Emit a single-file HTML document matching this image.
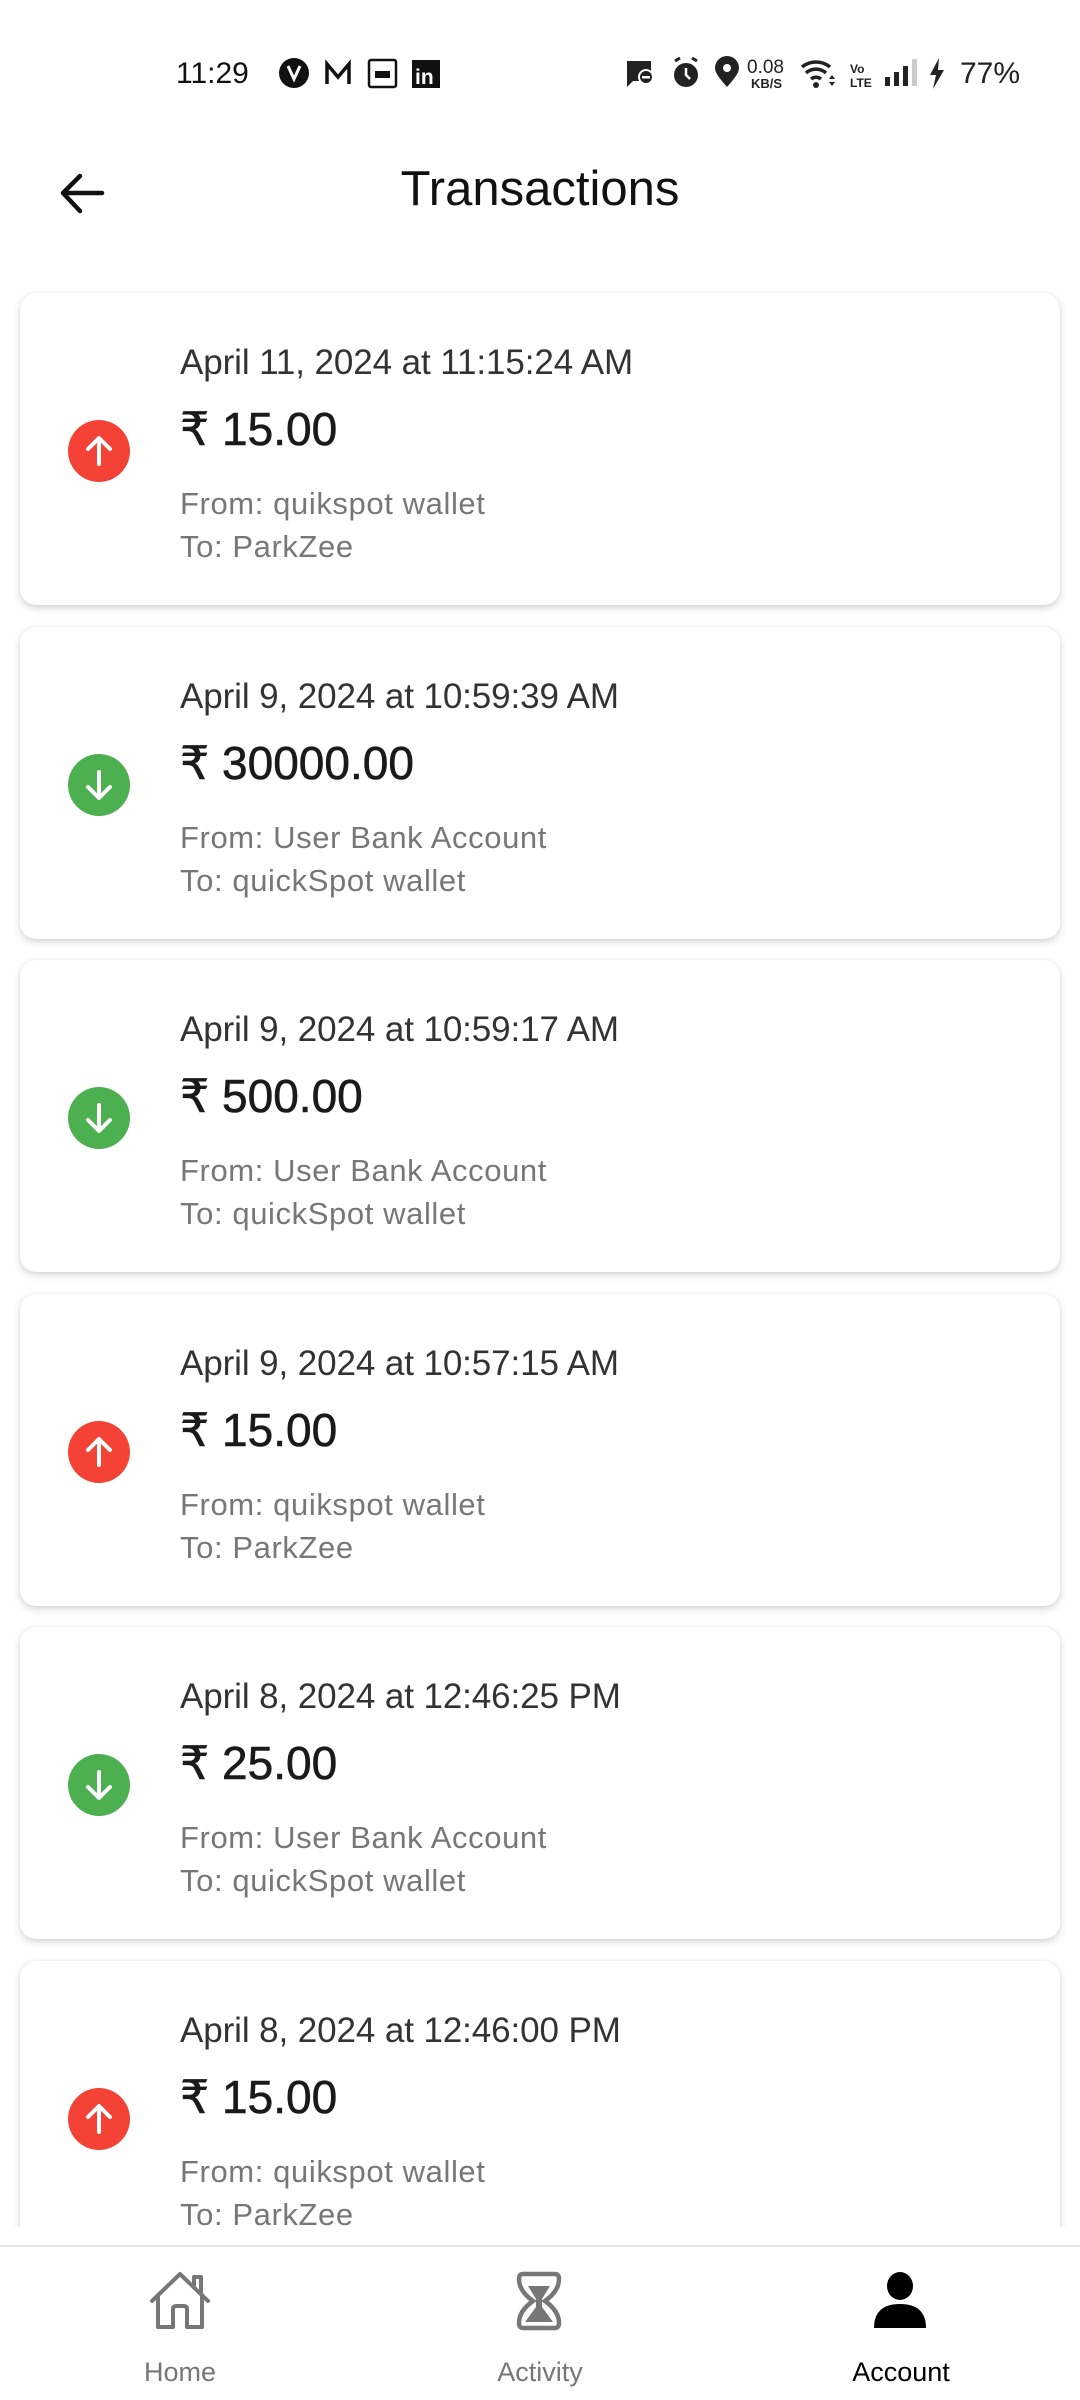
<!DOCTYPE html>
<html><head><meta charset="utf-8"><style>
*{margin:0;padding:0;box-sizing:border-box}
body{width:1080px;height:2400px;background:#fff;position:relative;overflow:hidden;font-family:"Liberation Sans",sans-serif}
.abs{position:absolute}
.t{position:absolute;line-height:1;white-space:nowrap}
.card{position:absolute;left:20px;width:1040px;height:312px;background:#fff;border-radius:16px;box-shadow:0 3px 8px rgba(0,0,0,0.16),0 0 3px rgba(0,0,0,0.06)}
.ic{position:absolute;left:48px;top:127px;width:62px;height:62px;border-radius:50%}
.up{background:#f44336}.dn{background:#4caf50}
.ic svg{position:absolute;left:0;top:0}
.date{left:160px;top:52px;font-size:35px;color:#333;letter-spacing:-0.1px}
.amt{left:160px;top:113px;font-size:46px;color:#1a1a1a;-webkit-text-stroke:0.6px #1a1a1a}
.fr{left:160px;top:195px;font-size:31px;color:#777;letter-spacing:0.6px}
.to{left:160px;top:238px;font-size:31px;color:#777;letter-spacing:0.6px}
.nav{position:absolute;left:0;top:2245px;width:1080px;height:155px;background:#fff;border-top:2px solid #e6e6e6}
.lbl{position:absolute;top:112px;font-size:27px;color:#777;transform:translateX(-50%)}
</style></head><body>
<!-- status bar -->
<div class="t" style="left:176px;top:59px;font-size:30px;color:#111">11:29</div>
<svg class="abs" style="left:278px;top:57px" width="165" height="32" viewBox="0 0 165 32">
<circle cx="16" cy="16" r="15" fill="#111"/><path d="M10 9 L16 22 L22 9" stroke="#fff" stroke-width="3" fill="none"/>
<path d="M49 27 V7 L60 20 L71 7 V27" stroke="#111" stroke-width="3.5" fill="none"/>
<rect x="91" y="3" width="27" height="27" rx="2" fill="none" stroke="#111" stroke-width="2.5"/><rect x="97" y="14" width="15" height="7" fill="#111"/>
<rect x="134" y="3" width="28" height="28" fill="#111"/><text x="137" y="27" font-family="Liberation Sans" font-weight="bold" font-size="21" fill="#fff">in</text>
</svg>
<svg class="abs" style="left:625px;top:55px" width="330" height="36" viewBox="0 0 330 36">
<path d="M2 6 H26 V26 H8 L2 32 Z" fill="#222"/><circle cx="21" cy="22" r="7" fill="#222" stroke="#fff" stroke-width="2"/><rect x="17" y="21" width="8" height="2.5" fill="#fff"/>
<circle cx="61" cy="20" r="12" fill="#222"/><path d="M50 6 L55 3 M72 6 L67 3" stroke="#222" stroke-width="3"/><path d="M61 13 V20 L65 24" stroke="#fff" stroke-width="2.5" fill="none"/>
<path d="M102 32 C95 24 90 18 90 13 A12 12 0 0 1 114 13 C114 18 109 24 102 32Z" fill="#222"/><circle cx="102" cy="13" r="4" fill="#fff"/>
<text x="122" y="18" font-family="Liberation Sans" font-size="19" fill="#222">0.08</text><text x="126" y="33" font-family="Liberation Sans" font-size="13" font-weight="bold" fill="#222">KB/S</text>
<path d="M177 12 A22 22 0 0 1 205 12 M181 18 A15 15 0 0 1 201 18 M186 24 A8 8 0 0 1 196 24" stroke="#222" stroke-width="3.5" fill="none"/><circle cx="191" cy="30" r="3" fill="#222"/><path d="M204 24 L207 20 L210 24Z M204 27 L207 31 L210 27Z" fill="#222"/>
<text x="225" y="18" font-family="Liberation Sans" font-size="12" font-weight="bold" fill="#222">Vo</text><text x="225" y="32" font-family="Liberation Sans" font-size="12" font-weight="bold" fill="#222">LTE</text>
<rect x="260" y="22" width="5" height="9" fill="#222"/><rect x="269" y="17" width="5" height="14" fill="#222"/><rect x="278" y="11" width="5" height="20" fill="#222"/><rect x="287" y="4" width="5" height="27" fill="#ccc"/>
<path d="M314 3 L305 20 H311 L308 34 L319 15 H313 Z" fill="#222"/>
</svg>
<div class="t" style="left:960px;top:59px;font-size:30px;color:#222">77%</div>

<!-- header -->
<svg class="abs" style="left:58px;top:172px" width="50" height="44" viewBox="0 0 50 44">
<path d="M44 21 H6 M22 4 L5 21 L22 39" stroke="#111" stroke-width="4.5" fill="none" stroke-linecap="round" stroke-linejoin="round"/>
</svg>
<div class="t" style="left:0;width:1080px;text-align:center;top:165px;font-size:49px;color:#111">Transactions</div>

<!-- cards -->
<div class="abs" style="left:0;top:0;width:1080px;height:2227px;overflow:hidden">
<div class="card" style="top:293px"><div class="ic up"><svg width="62" height="62"><path d="M31 44 V19 M20 29 L31 18 L42 29" stroke="#fff" stroke-width="4" fill="none" stroke-linecap="round" stroke-linejoin="round"/></svg></div>
<div class="t date">April 11, 2024 at 11:15:24 AM</div><div class="t amt">₹ 15.00</div><div class="t fr">From: quikspot wallet</div><div class="t to">To: ParkZee</div></div>

<div class="card" style="top:627px"><div class="ic dn"><svg width="62" height="62"><path d="M31 18 V43 M20 33 L31 44 L42 33" stroke="#fff" stroke-width="4" fill="none" stroke-linecap="round" stroke-linejoin="round"/></svg></div>
<div class="t date">April 9, 2024 at 10:59:39 AM</div><div class="t amt">₹ 30000.00</div><div class="t fr">From: User Bank Account</div><div class="t to">To: quickSpot wallet</div></div>

<div class="card" style="top:960px"><div class="ic dn"><svg width="62" height="62"><path d="M31 18 V43 M20 33 L31 44 L42 33" stroke="#fff" stroke-width="4" fill="none" stroke-linecap="round" stroke-linejoin="round"/></svg></div>
<div class="t date">April 9, 2024 at 10:59:17 AM</div><div class="t amt">₹ 500.00</div><div class="t fr">From: User Bank Account</div><div class="t to">To: quickSpot wallet</div></div>

<div class="card" style="top:1294px"><div class="ic up"><svg width="62" height="62"><path d="M31 44 V19 M20 29 L31 18 L42 29" stroke="#fff" stroke-width="4" fill="none" stroke-linecap="round" stroke-linejoin="round"/></svg></div>
<div class="t date">April 9, 2024 at 10:57:15 AM</div><div class="t amt">₹ 15.00</div><div class="t fr">From: quikspot wallet</div><div class="t to">To: ParkZee</div></div>

<div class="card" style="top:1627px"><div class="ic dn"><svg width="62" height="62"><path d="M31 18 V43 M20 33 L31 44 L42 33" stroke="#fff" stroke-width="4" fill="none" stroke-linecap="round" stroke-linejoin="round"/></svg></div>
<div class="t date">April 8, 2024 at 12:46:25 PM</div><div class="t amt">₹ 25.00</div><div class="t fr">From: User Bank Account</div><div class="t to">To: quickSpot wallet</div></div>

<div class="card" style="top:1961px"><div class="ic up"><svg width="62" height="62"><path d="M31 44 V19 M20 29 L31 18 L42 29" stroke="#fff" stroke-width="4" fill="none" stroke-linecap="round" stroke-linejoin="round"/></svg></div>
<div class="t date">April 8, 2024 at 12:46:00 PM</div><div class="t amt">₹ 15.00</div><div class="t fr">From: quikspot wallet</div><div class="t to">To: ParkZee</div></div>
</div>

<!-- bottom nav -->
<div class="nav">
<svg class="abs" style="left:148px;top:24px" width="64" height="60" viewBox="0 0 64 60">
<path d="M4 30 L32 3 L60 30 M10 24 V56 H25 V38 Q25 35 28 35 H36 Q39 35 39 38 V56 H54 V24 M46 15 V6 H53 V22" stroke="#777" stroke-width="4" fill="none" stroke-linejoin="round" stroke-linecap="round"/>
</svg>
<svg class="abs" style="left:515px;top:24px" width="48" height="60" viewBox="0 0 48 60">
<path d="M8 3 H40 Q44 3 44 8 Q44 20 30 30 Q44 40 44 52 Q44 57 40 57 H8 Q4 57 4 52 Q4 40 18 30 Q4 20 4 8 Q4 3 8 3 Z" stroke="#777" stroke-width="4.5" fill="none"/>
<path d="M13 15 H35 L27 28 V36 L38 51 H10 L21 36 V28 Z" fill="#777"/>
</svg>
<svg class="abs" style="left:871px;top:24px" width="58" height="60" viewBox="0 0 58 60">
<ellipse cx="29" cy="15" rx="13" ry="14" fill="#000"/>
<path d="M3 57 Q3 33 29 33 Q55 33 55 57 Z" fill="#000"/>
</svg>
<div class="t lbl" style="left:180px">Home</div>
<div class="t lbl" style="left:540px">Activity</div>
<div class="t lbl" style="left:901px;color:#000">Account</div>
</div>
</body></html>
